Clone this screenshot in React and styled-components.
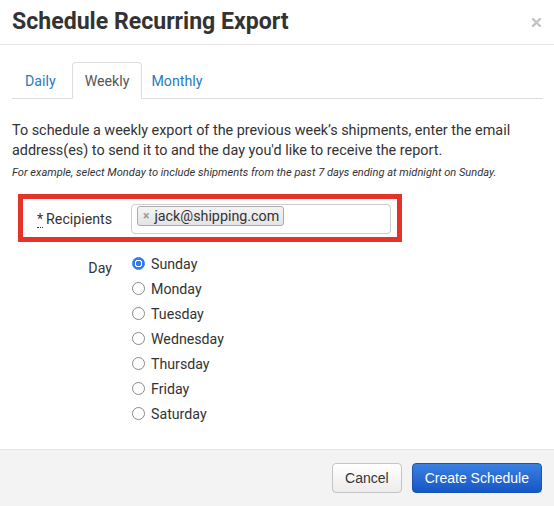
import React, { useState } from 'react';
import styled, { createGlobalStyle } from 'styled-components';

const GlobalStyle = createGlobalStyle`
  html, body {
    margin: 0;
    padding: 0;
    background: #fff;
  }
  body {
    font-family: Roboto, 'Liberation Sans', sans-serif;
    color: #333;
  }
`

const Modal = styled.div`
  width: 554px;
  height: 506px;
  display: flex;
  flex-direction: column;
  background: #fff;
  overflow: hidden;
`

const Header = styled.div`
  height: 45px;
  box-sizing: border-box;
  border-bottom: 1px solid #e5e5e5;
  display: flex;
  align-items: center;
  justify-content: space-between;
  padding: 0 13px 0 12px;
`

const Title = styled.h1`
  margin: 0;
  font-size: 23.1px;
  font-weight: 700;
  color: #333;
  padding-bottom: 2px;
`

const Close = styled.button`
  border: 0;
  background: none;
  padding: 0;
  width: 9px;
  height: 9px;
  display: flex;
  cursor: pointer;
  margin-top: 1px;
`

const Body = styled.div`
  flex: 1;
  padding: 17px 11px 0 12px;
`

const Tabs = styled.ul`
  list-style: none;
  margin: 0;
  padding: 0;
  display: flex;
  border-bottom: 1px solid #ddd;
  height: 36px;
`

const Tab = styled.li`
  box-sizing: border-box;
  height: 37px;
  display: flex;
  align-items: center;
  font-size: 14.2px;
  padding: 0 12px;
  margin: ${p => (p.active ? '0 -4px 0 3px' : '0')};
  color: ${p => (p.active ? '#555' : '#2a7ac0')};
  background: ${p => (p.active ? '#fff' : 'transparent')};
  border: 1px solid ${p => (p.active ? '#ddd' : 'transparent')};
  border-bottom-color: ${p => (p.active ? '#fff' : 'transparent')};
  border-radius: 4px 4px 0 0;
  cursor: pointer;
`

const Intro = styled.p`
  margin: 22px 0 0;
  font-size: 14.4px;
  line-height: 20px;
  color: #333;
`

const Hint = styled.p`
  margin: 4px 0 0;
  font-size: 11.1px;
  font-style: italic;
  line-height: 15px;
  color: #333;
`

const Highlight = styled.div`
  margin: 14px 0 0 6px;
  width: 384px;
  box-sizing: border-box;
  border: 5px solid #e5332a;
  padding: 5px 6px 3px 0;
  display: grid;
  grid-template-columns: 89px 1fr;
  column-gap: 19px;
  align-items: center;
`

const Label = styled.label`
  text-align: right;
  font-size: 14.2px;
  color: #333;
  abbr {
    text-decoration: none;
    border-bottom: 1px dotted #333;
    margin-right: 3px;
  }
`

const TagInput = styled.div`
  height: 30px;
  box-sizing: border-box;
  border: 1px solid #ccc;
  border-radius: 4px;
  background: #fff;
  display: flex;
  align-items: flex-start;
  padding: 1px 5px;
`

const Tag = styled.span`
  display: inline-flex;
  align-items: center;
  gap: 5px;
  height: 20px;
  box-sizing: border-box;
  padding: 0 4px 0 5px;
  border: 1px solid #aaa;
  border-radius: 3px;
  background: linear-gradient(#f4f4f4, #e4e4e4);
  font-size: 14.3px;
  color: #333;
`

const TagRemove = styled.span`
  color: #999;
  font-size: 12px;
  font-weight: 700;
  line-height: 1;
`

const DayRow = styled.div`
  margin: 9px 0 0 11px;
  display: grid;
  grid-template-columns: 89px 1fr;
  column-gap: 20px;
  align-items: start;
`

const DayLabel = styled.div`
  text-align: right;
  font-size: 14.2px;
  line-height: 25px;
  padding-top: 5px;
`

const RadioList = styled.div`
  display: flex;
  flex-direction: column;
`

const RadioOption = styled.label`
  display: flex;
  align-items: center;
  gap: 6px;
  height: 25px;
  font-size: 14.2px;
  color: #333;
  cursor: pointer;
`

const RadioDot = styled.span`
  width: 13px;
  height: 13px;
  box-sizing: border-box;
  border-radius: 50%;
  border: 1px solid ${p => (p.checked ? '#2f7bf5' : '#8a8a8a')};
  background: ${p => (p.checked ? 'radial-gradient(circle, #2f7bf5 0 2.6px, #fff 3px 3.6px, #2f7bf5 4px)' : '#fff')};
`

const Footer = styled.div`
  height: 57px;
  box-sizing: border-box;
  border-top: 1px solid #e3e3e3;
  background: #f3f3f3;
  display: flex;
  align-items: center;
  justify-content: flex-end;
  gap: 10px;
  padding: 0 12px 1px 0;
`

const Button = styled.button`
  height: 30px;
  box-sizing: border-box;
  border-radius: 4px;
  font-family: 'Liberation Sans', Arial, sans-serif;
  font-size: 14px;
  padding: 0 12px;
  cursor: pointer;
  color: ${p => (p.primary ? '#fff' : '#333')};
  border: 1px solid ${p => (p.primary ? '#1c52b0' : '#c4c4c4')};
  background: ${p => (p.primary ? 'linear-gradient(#3a80e2, #1656c6)' : 'linear-gradient(#fff, #ececec)')};
`

const days = ['Sunday', 'Monday', 'Tuesday', 'Wednesday', 'Thursday', 'Friday', 'Saturday'];

export default function App() {
  const [tab, setTab] = useState('Weekly');
  const [day, setDay] = useState('Sunday');

  return (
    <Modal>
      <GlobalStyle />
      <Header>
        <Title>Schedule Recurring Export</Title>
        <Close aria-label="Close">
          <svg width="9" height="9" viewBox="0 0 9 9">
            <path d="M1 1 L8 8 M8 1 L1 8" stroke="#c4c4c4" strokeWidth="2.4" strokeLinecap="square" />
          </svg>
        </Close>
      </Header>
      <Body>
        <Tabs>
          {['Daily', 'Weekly', 'Monthly'].map(t => (
            <Tab key={t} active={t === tab} onClick={() => setTab(t)}>{t}</Tab>
          ))}
        </Tabs>
        <Intro>
          To schedule a weekly export of the previous week’s shipments, enter the email
          address(es) to send it to and the day you'd like to receive the report.
        </Intro>
        <Hint>For example, select Monday to include shipments from the past 7 days ending at midnight on Sunday.</Hint>
        <Highlight>
          <Label><abbr title="required">*</abbr>Recipients</Label>
          <TagInput>
            <Tag><TagRemove>×</TagRemove>jack@shipping.com</Tag>
          </TagInput>
        </Highlight>
        <DayRow>
          <DayLabel>Day</DayLabel>
          <RadioList>
            {days.map(d => (
              <RadioOption key={d} onClick={() => setDay(d)}>
                <RadioDot checked={d === day} />
                {d}
              </RadioOption>
            ))}
          </RadioList>
        </DayRow>
      </Body>
      <Footer>
        <Button>Cancel</Button>
        <Button primary>Create Schedule</Button>
      </Footer>
    </Modal>
  );
}
